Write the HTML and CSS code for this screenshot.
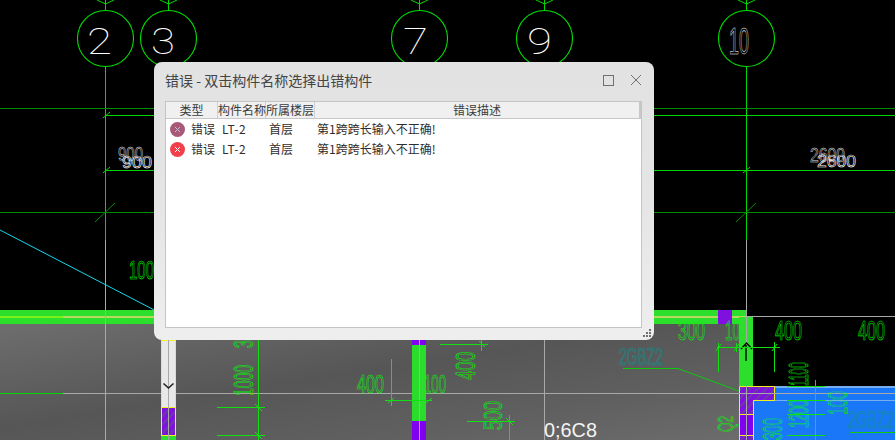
FILE: index.html
```html
<!DOCTYPE html>
<html lang="zh-CN">
<head>
<meta charset="utf-8">
<title>错误 - 双击构件名称选择出错构件</title>
<link rel="stylesheet" href="styles.css">
</head>
<body>
<main class="stage">
  <svg class="cad" width="895" height="440" viewBox="0 0 895 440" xmlns="http://www.w3.org/2000/svg">
    <defs>
      <linearGradient id="floor" x1="0" y1="0" x2="1" y2="1">
        <stop offset="0" stop-color="#6e6e6e"/>
        <stop offset="0.45" stop-color="#565656"/>
        <stop offset="0.75" stop-color="#606060"/>
        <stop offset="1" stop-color="#6c6c6c"/>
      </linearGradient>
      <pattern id="hatch" width="6" height="6" patternUnits="userSpaceOnUse" patternTransform="rotate(45)">
        <rect width="6" height="6" fill="#7f10e0"/>
        <rect width="2" height="6" fill="#6d3aa8"/>
      </pattern>
    </defs>

    <!-- floor areas -->
    <rect x="0" y="323" width="745" height="117" fill="url(#floor)"/>

    <!-- grid bubbles -->
    <g class="ln-green">
      <circle class="bubble" cx="105.500" cy="38.500" r="28"/>
      <circle class="bubble" cx="168.500" cy="38.500" r="28"/>
      <circle class="bubble" cx="419.500" cy="38.500" r="28"/>
      <circle class="bubble" cx="544.500" cy="38.500" r="28"/>
      <circle class="bubble" cx="746.500" cy="38.500" r="28"/>
      <path d="M105.500 66V240M168.500 66V100M419.500 0V10M419.500 66V100M544.500 66V100M746.500 66V240M105.500 0V10M168.500 0V10M544.500 0V10M746.500 0V10"/>
      <path d="M97 0l8.500 4l8.500-4M160 0l8.500 4l8.500-4M411 0l8.500 4l8.500-4M536 0l8.500 4l8.500-4M738 0l8.500 4l8.500-4"/>
      <path d="M105 115.500H895M105 170.500H895"/>
      <path d="M103 118l7-6M103 173l7-6M743 173l7-6"/>
    </g>
    <g class="ln-dim">
      <path d="M0 108.500H895M0 212.500H895"/>
      <path d="M95 222l20-19M736 222l20-19"/>
    </g>
    <path class="ln-cyan" d="M0 230L160 313"/>

    <!-- grid labels -->
    <text class="t-digit" x="87" y="54" font-size="36" textLength="25" lengthAdjust="spacingAndGlyphs">2</text>
    <text class="t-digit" x="151" y="54" font-size="36" textLength="24" lengthAdjust="spacingAndGlyphs">3</text>
    <text class="t-digit" x="403" y="54" font-size="36" textLength="25" lengthAdjust="spacingAndGlyphs">7</text>
    <text class="t-digit" x="527" y="54" font-size="36" textLength="25" lengthAdjust="spacingAndGlyphs">9</text>
    <text class="t-white" x="729" y="54" font-size="36" textLength="20" lengthAdjust="spacingAndGlyphs">10</text>

    <text class="t-white thin" x="118" y="161" font-size="20" textLength="25" lengthAdjust="spacingAndGlyphs">900</text>
    <text class="t-white" x="122" y="168" font-size="17" textLength="30" lengthAdjust="spacingAndGlyphs">900</text>
    <text class="t-white thin" x="810" y="162" font-size="20" textLength="35" lengthAdjust="spacingAndGlyphs">2600</text>
    <text class="t-white" x="817" y="167" font-size="17" textLength="39" lengthAdjust="spacingAndGlyphs">2600</text>
    <text class="t-green" x="129" y="279" font-size="26" textLength="25" lengthAdjust="spacingAndGlyphs">100</text>

    <!-- beam band -->
    <rect x="0" y="310" width="746" height="14" fill="#2cdf2c"/>
    <rect x="0" y="316" width="63" height="2" fill="#7df01a"/>
    <rect x="63" y="316" width="683" height="2" fill="#b8d860"/>
    <rect x="718" y="310" width="14" height="14" fill="#7f10e0"/>

    <!-- grey axis lines -->
    <g class="ln-gray">
      <path d="M105.500 240V440M544.500 323V440M746.500 240V440M63 393.500H895"/>
    </g>
    <path class="ln-green" d="M0 393.500H63"/>

    <!-- wall left -->
    <rect class="wall-white" x="161.500" y="340.500" width="14" height="67"/>
    <rect x="161.500" y="407.500" width="14" height="28" fill="url(#hatch)" stroke="#f6f020"/>
    <rect x="161" y="436" width="15" height="4" fill="#2cdf2c"/>
    <path class="ln-gray" d="M168.500 340V440"/>
    <path class="chev" d="M163.500 383.500l5 4.500l5-4.500"/>

    <!-- wall middle -->
    <rect x="412" y="320" width="14" height="120" fill="#2cdc2c"/>
    <rect x="412" y="340" width="14" height="5" fill="#8000f0"/>
    <rect x="412" y="421" width="14" height="19" fill="#8000f0"/>
    <path class="ln-gray" d="M419.500 340V440"/>

    <!-- right wall -->
    <rect x="746" y="310" width="149" height="76" fill="#000"/>
    <rect x="739" y="317" width="14" height="69" fill="#2cdf2c"/>
    <path class="ln-gray" d="M746.500 240V345M746 316.500H895"/>
    <path class="arrow" d="M741 349l5.500-6l5.500 6M746 345V361"/>

    <!-- slab -->
    <rect x="739" y="386" width="156" height="54" fill="#1a78f8"/>
    <rect x="775" y="386" width="120" height="2" fill="#78aef0"/>
    <rect x="753" y="400" width="142" height="1" fill="#78aef0"/>
    <rect x="739" y="386" width="36" height="14" fill="url(#hatch)"/>
    <rect x="739" y="400" width="14" height="40" fill="url(#hatch)"/>
    <rect x="740" y="414" width="13" height="21" fill="#8000f0"/>
    <path class="ln-yellow" d="M739.500 440V386.500H774.500V400.500H753.500V440M739 414.500H753M739 435.500H753"/>
    <path class="ln-gray" d="M746.500 386V440M739 393.500H895"/>

    <!-- dimensions -->
    <g class="ln-green2">
      <path d="M258.500 340V440M217 407.500H265M217 435.500H265M255 404l7 7M255 432l7 7"/>
      <path d="M385 400.500H432M391.500 359V406M388 403l6-5M426 403l6-5"/>
      <path d="M440 344.500H488M481.500 332V351M479 341l6 6"/>
      <path d="M467 421.500H515M509.500 415V440M506 418l7 7"/>
      <path d="M717 347.500H780M718.500 343V372M736.500 343V352M774.500 342V372M716 351l5-7M734 351l5-7M772 351l5-7"/>
      <path d="M815.500 380V440M787 386.500H825M787 400.500H825M787 414.500H825M787 435.500H825"/>
    </g>
    <path class="ln-leader" d="M623 368.500H678L739 391"/>
    <path class="ln-leader" d="M850 432.500H895"/>

    <text class="t-green" transform="translate(253 348) rotate(-90)" font-size="28" textLength="8" lengthAdjust="spacingAndGlyphs">3</text>
    <text class="t-green" transform="translate(253 396) rotate(-90)" font-size="28" textLength="31" lengthAdjust="spacingAndGlyphs">1000</text>
    <text class="t-green" x="357" y="393" font-size="26" textLength="27" lengthAdjust="spacingAndGlyphs">400</text>
    <text class="t-green" x="424" y="393" font-size="26" textLength="22" lengthAdjust="spacingAndGlyphs">100</text>
    <text class="t-green" transform="translate(475 380) rotate(-90)" font-size="27" textLength="28" lengthAdjust="spacingAndGlyphs">400</text>
    <text class="t-green" transform="translate(502 430) rotate(-90)" font-size="26" textLength="29" lengthAdjust="spacingAndGlyphs">500</text>
    <text class="t-green" x="678" y="340" font-size="27" textLength="27" lengthAdjust="spacingAndGlyphs">300</text>
    <text class="t-green" x="725" y="340" font-size="27" textLength="15" lengthAdjust="spacingAndGlyphs">10</text>
    <text class="t-green" x="775" y="340" font-size="27" textLength="27" lengthAdjust="spacingAndGlyphs">400</text>
    <text class="t-green" x="858" y="340" font-size="27" textLength="27" lengthAdjust="spacingAndGlyphs">400</text>
    <text class="t-green" transform="translate(808 386) rotate(-90)" font-size="27" textLength="24" lengthAdjust="spacingAndGlyphs">1100</text>
    <text class="t-green" transform="translate(808 428) rotate(-90)" font-size="27" textLength="28" lengthAdjust="spacingAndGlyphs">1200</text>
    <text class="t-green" transform="translate(847 415) rotate(-90)" font-size="27" textLength="24" lengthAdjust="spacingAndGlyphs">100</text>
    <text class="t-green" transform="translate(782 440) rotate(-90)" font-size="28" textLength="22" lengthAdjust="spacingAndGlyphs">300</text>
    <text class="t-green" transform="translate(733 432) rotate(-90)" font-size="22" textLength="16" lengthAdjust="spacingAndGlyphs">Q2</text>
    <text class="t-teal" x="619" y="365" font-size="23" textLength="44" lengthAdjust="spacingAndGlyphs">2GBZ2</text>
    <text class="t-teal" x="848" y="428" font-size="23" textLength="46" lengthAdjust="spacingAndGlyphs">2GBZ2</text>
    <text class="t-solid" x="544" y="437" font-size="20" textLength="53" lengthAdjust="spacingAndGlyphs">0;6C8</text>
  </svg>

  <section class="dialog">
    <header class="titlebar">
      <h1 class="title">错误 - 双击构件名称选择出错构件</h1>
      <div class="win-btns">
        <svg class="win-icon" width="11" height="11" viewBox="0 0 11 11"><rect x="0.500" y="0.500" width="10" height="10"/></svg>
        <svg class="win-icon" width="12" height="12" viewBox="0 0 12 12"><path d="M1 1L11 11M11 1L1 11"/></svg>
      </div>
    </header>
    <div class="list">
      <div class="row head">
        <div class="hcell">类型</div>
        <div class="hcell">构件名称</div>
        <div class="hcell">所属楼层</div>
        <div class="hcell last">错误描述</div>
      </div>
      <div class="row item">
        <div class="cell kind">
          <svg class="err dim" width="15" height="15" viewBox="0 0 15 15"><circle cx="7.500" cy="7.500" r="7.500"/><path d="M5 5L10 10M10 5L5 10"/></svg>
          <span>错误</span>
        </div>
        <div class="cell name">LT-2</div>
        <div class="cell floor">首层</div>
        <div class="cell desc">第1跨跨长输入不正确!</div>
      </div>
      <div class="row item">
        <div class="cell kind">
          <svg class="err" width="15" height="15" viewBox="0 0 15 15"><circle cx="7.500" cy="7.500" r="7.500"/><path d="M5 5L10 10M10 5L5 10"/></svg>
          <span>错误</span>
        </div>
        <div class="cell name">LT-2</div>
        <div class="cell floor">首层</div>
        <div class="cell desc">第1跨跨长输入不正确!</div>
      </div>
    </div>
    <svg class="grip" width="9" height="9" viewBox="0 0 9 9">
      <rect x="6" y="0" width="2" height="2"/><rect x="3" y="3" width="2" height="2"/><rect x="6" y="3" width="2" height="2"/>
      <rect x="0" y="6" width="2" height="2"/><rect x="3" y="6" width="2" height="2"/><rect x="6" y="6" width="2" height="2"/>
    </svg>
  </section>
</main>
</body>
</html>
```
FILE: styles.css
```css
* { box-sizing: border-box; }
html, body { margin: 0; padding: 0; background: #000; }
.stage { position: relative; width: 895px; height: 440px; overflow: hidden; background: #000; }
.cad { position: absolute; left: 0; top: 0; display: block; }
.cad path, .cad circle { fill: none; }
.cad text { font-family: "Liberation Sans", sans-serif; }
.ln-green path, .ln-green circle, path.ln-green { stroke: #00d800; stroke-width: 1; }
.ln-green .bubble { stroke: #00e000; stroke-width: 1.100; }
.ln-dim path { stroke: #008c00; stroke-width: 1; }
.ln-cyan { stroke: #10d8e8; stroke-width: 1; }
.ln-gray, .ln-gray path { stroke: #a8a8a8; stroke-width: 1; }
.ln-green2 path { stroke: #10e010; stroke-width: 1; }
.ln-leader { stroke: #10c810; stroke-width: 1; }
.ln-yellow { stroke: #f6f020; stroke-width: 1; }
.wall-white { fill: #e8e8e8; stroke: #f6f020; stroke-width: 1; }
.chev { stroke: #222; stroke-width: 1.600; }
.arrow { stroke: #000; stroke-width: 1.400; }
.cad text.t-digit { font-family: Roboto, "Liberation Sans", sans-serif; font-weight: 100; fill: #ffffff; }
.t-white { fill: none; stroke: #ffffff; stroke-width: 0.600; }
.t-white.thin { stroke: #e8e8e8; stroke-width: 0.500; }
.t-green { fill: none; stroke: #00f400; stroke-width: 0.700; }
.t-teal { fill: none; stroke: #0a9090; stroke-width: 0.700; }
.t-solid { fill: #f4f4f4; }

.dialog {
  position: absolute; left: 154px; top: 62px; width: 500px; height: 278px;
  border-radius: 8px; padding: 0 12px 12px 11px;
  display: flex; flex-direction: column;
  background: linear-gradient(180deg, #e2e2e2 0%, #e5e5e5 50%, #eeeeee 100%);
  font-family: "Noto Sans CJK SC", "Liberation Sans", sans-serif;
  color: #333;
}
.titlebar { flex: none; height: 39px; padding-bottom: 3px; display: flex; align-items: center; justify-content: space-between; }
.title { margin: 0; font-size: 14px; font-weight: 400; color: #444; line-height: 1; }
.win-btns { display: flex; align-items: center; gap: 16px; }
.win-icon { display: block; }
.win-icon rect, .win-icon path { fill: none; stroke: #707070; stroke-width: 1; }
.list { flex: 1; display: flex; flex-direction: column; background: #fff; border: 1px solid #c4c4c4; }
.row { display: grid; grid-template-columns: 52px 48px 49px 1fr; }
.head { height: 17px; background: #f0f0f0; border-bottom: 1px solid #c8c8c8; font-size: 12px; line-height: 16px; }
.hcell { text-align: center; border-right: 1px solid #d0d0d0; white-space: nowrap; color: #3c3c3c; }
.hcell.last { border-right: 2px solid #c8c8c8; }
.item { height: 20px; font-size: 12px; line-height: 20px; color: #2e2e2e; }
.cell { white-space: nowrap; }
.kind { display: flex; align-items: center; gap: 6px; padding-left: 4px; }
.name { padding-left: 4px; letter-spacing: 0.600px; }
.floor { padding-left: 3px; }
.desc { padding-left: 2px; }
.err { display: block; flex: none; }
.err circle { fill: #f0404c; }
.err path { fill: none; stroke: #fff; stroke-width: 1; }
.err.dim circle { fill: #a65a78; }
.err.dim path { stroke: #c8bcd0; }
.grip { position: absolute; right: 2px; bottom: 2px; display: block; }
.grip rect { fill: #707070; }
```
